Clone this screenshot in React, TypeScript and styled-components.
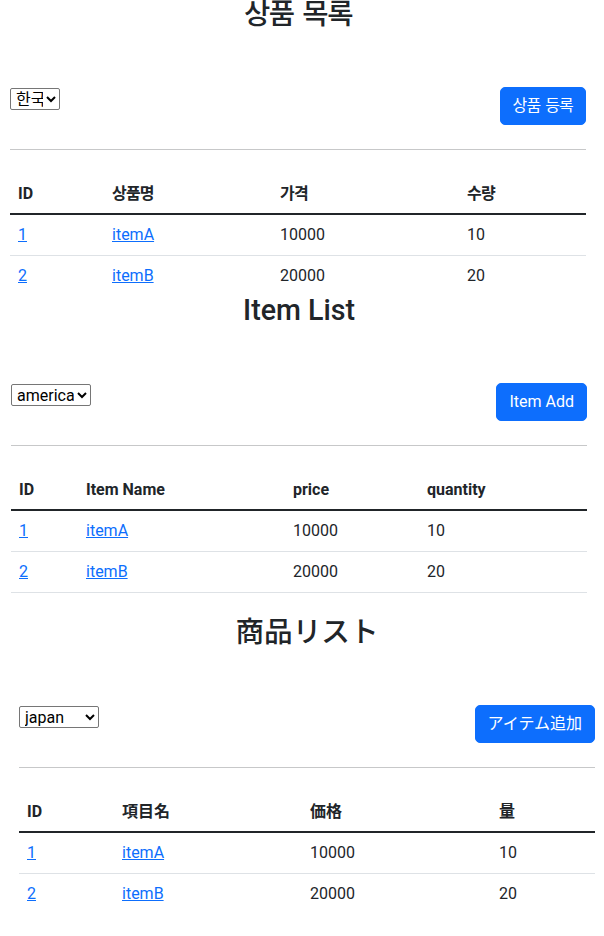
import React from 'react';
import styled, { createGlobalStyle } from 'styled-components';

const GlobalStyle = createGlobalStyle`
  html, body { margin: 0; padding: 0; background: #ffffff; }
  body {
    font-family: Roboto, "Noto Sans", sans-serif;
    color: #212529;
    font-size: 16px;
    line-height: 24px;
    overflow: hidden;
  }
`;

const Page = styled.div`
  display: flex;
  flex-direction: column;
`;

const Section = styled.section<{ $left: number; $top: number; $font: string }>`
  width: 576px;
  margin-left: ${(p) => p.$left}px;
  margin-top: ${(p) => p.$top}px;
  font-family: ${(p) => p.$font};
  display: flex;
  flex-direction: column;
`;

const Title = styled.h2`
  margin: 0;
  height: 40px;
  line-height: 40px;
  font-size: 28.6px;
  font-weight: 500;
  text-align: center;
  color: #212529;
`;

const Hangul = styled.span`
  letter-spacing: -0.05em;
  word-spacing: 0.1em;
`;

const Toolbar = styled.div`
  display: flex;
  justify-content: space-between;
  align-items: flex-start;
  margin-top: 53px;
`;

const LangSelect = styled.select<{ $w: number }>`
  width: ${(p) => p.$w}px;
  height: 22px;
  margin: 1px 0 0 0;
  padding: 0 0 0 1px;
  box-sizing: border-box;
  font-family: inherit;
  font-size: 16px;
  color: #000000;
  background: #ffffff;
  border: 1px solid #767676;
  border-radius: 2px;
`;

const PrimaryButton = styled.button`
  height: 38px;
  padding: 6px 12px;
  box-sizing: border-box;
  font-family: inherit;
  font-size: 16px;
  line-height: 24px;
  font-weight: 400;
  color: #ffffff;
  background: #0d6efd;
  border: 1px solid #0d6efd;
  border-radius: 5px;
  white-space: nowrap;
`;

const Rule = styled.hr`
  margin: 24px 0 0 0;
  height: 0;
  border: 0;
  border-top: 1px solid #c7c8c9;
`;

const Table = styled.table`
  margin-top: 24px;
  width: 576px;
  border-collapse: collapse;
  table-layout: fixed;
`;

const HeadRow = styled.tr`
  border-bottom: 2px solid #212529;
`;

const BodyRow = styled.tr<{ $noBorder?: boolean }>`
  border-bottom: ${(p) => (p.$noBorder ? '0' : '1px solid #dee2e6')};
`;

const HeadCell = styled.th`
  padding: 8px 8px 7px;
  line-height: 24px;
  text-align: left;
  font-weight: 700;
  color: #212529;
`;

const Cell = styled.td`
  padding: 8px;
  line-height: 24px;
  text-align: left;
  color: #212529;
`;

const ItemLink = styled.a`
  color: #0d6efd;
  text-decoration: underline;
`;

type Item = { id: number; name: string; price: number; quantity: number };

const items: Item[] = [
  { id: 1, name: 'itemA', price: 10000, quantity: 10 },
  { id: 2, name: 'itemB', price: 20000, quantity: 20 },
];

type Locale = {
  left: number;
  top: number;
  font: string;
  title: React.ReactNode;
  button: React.ReactNode;
  headers: React.ReactNode[];
  cols: number[];
  options: string[];
  selected: string;
  selectWidth: number;
  lastBorder: boolean;
};

const locales: Locale[] = [
  {
    left: 10,
    top: -6,
    font: 'Roboto, "Noto Sans CJK KR", sans-serif',
    title: <Hangul>상품 목록</Hangul>,
    button: <Hangul>상품 등록</Hangul>,
    headers: ['ID', <Hangul key="n">상품명</Hangul>, <Hangul key="p">가격</Hangul>, <Hangul key="q">수량</Hangul>],
    cols: [94, 168, 187, 127],
    options: ['한국', '미국', '일본'],
    selected: '한국',
    selectWidth: 50,
    lastBorder: false,
  },
  {
    left: 11,
    top: -6,
    font: 'Roboto, "Noto Sans", sans-serif',
    title: 'Item List',
    button: 'Item Add',
    headers: ['ID', 'Item Name', 'price', 'quantity'],
    cols: [67, 207, 134, 168],
    options: ['korea', 'america', 'japan'],
    selected: 'america',
    selectWidth: 80,
    lastBorder: true,
  },
  {
    left: 19,
    top: 19,
    font: 'Roboto, "Noto Sans CJK JP", sans-serif',
    title: '商品リスト',
    button: 'アイテム追加',
    headers: ['ID', '項目名', '価格', '量'],
    cols: [95, 188, 189, 104],
    options: ['korea', 'america', 'japan'],
    selected: 'japan',
    selectWidth: 80,
    lastBorder: false,
  },
];

function ItemSection({ loc }: { loc: Locale }) {
  return (
    <Section $left={loc.left} $top={loc.top} $font={loc.font}>
      <Title>{loc.title}</Title>
      <Toolbar>
        <LangSelect $w={loc.selectWidth} defaultValue={loc.selected}>
          {loc.options.map((o) => (
            <option key={o} value={o}>
              {o}
            </option>
          ))}
        </LangSelect>
        <PrimaryButton type="button">{loc.button}</PrimaryButton>
      </Toolbar>
      <Rule />
      <Table>
        <colgroup>
          {loc.cols.map((w, i) => (
            <col key={i} style={{ width: w }} />
          ))}
        </colgroup>
        <thead>
          <HeadRow>
            {loc.headers.map((h, i) => (
              <HeadCell key={i}>{h}</HeadCell>
            ))}
          </HeadRow>
        </thead>
        <tbody>
          {items.map((it, i) => (
            <BodyRow key={it.id} $noBorder={!loc.lastBorder && i === items.length - 1}>
              <Cell>
                <ItemLink href="#">{it.id}</ItemLink>
              </Cell>
              <Cell>
                <ItemLink href="#">{it.name}</ItemLink>
              </Cell>
              <Cell>{it.price}</Cell>
              <Cell>{it.quantity}</Cell>
            </BodyRow>
          ))}
        </tbody>
      </Table>
    </Section>
  );
}

export default function App() {
  return (
    <>
      <GlobalStyle />
      <Page>
        {locales.map((loc, i) => (
          <ItemSection key={i} loc={loc} />
        ))}
      </Page>
    </>
  );
}
